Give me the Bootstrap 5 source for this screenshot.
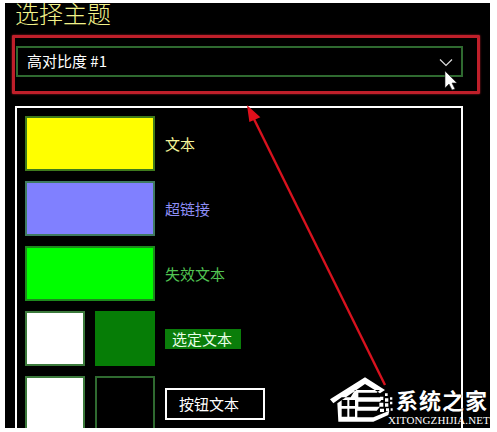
<!DOCTYPE html>
<html lang="zh">
<head>
<meta charset="utf-8">
<title>选择主题</title>
<link rel="stylesheet" href="https://cdn.jsdelivr.net/npm/bootstrap@5.3.0/dist/css/bootstrap.min.css">
<style>
html,body{background:#fff;height:100%;overflow:hidden}
body{font-family:"Noto Sans CJK SC","Liberation Sans",sans-serif;font-weight:400}
.shot{position:relative;width:485px;height:425px;margin:3px 0 0 5px;background:#000;overflow:hidden;padding-left:7px}
.ttl{margin:-2px 0 0 3px;height:34px;font-size:24px;line-height:24px;font-weight:300;color:#f2f28a}
.redbox{width:468px;height:59px;border:3px solid #bf1f2a;border-radius:1px;padding:8px 0 0 1px;box-shadow:0 0 2px #bf1f2a}
.pick{width:447px;height:31px;border:2px solid #2f6a30;padding:0 10px 0 9px;color:#fff;font-size:15px}
.chev{width:14px;height:9px;margin-right:-2px;margin-top:2px}
.prev{width:448px;height:340px;margin:12px 0 0 3px;border:2px solid #fff;padding:8px;display:flex;flex-direction:column;gap:10px}
.rowx{display:flex;align-items:center;gap:10px;height:55px;flex:none}
.sw{flex:none;height:55px;border:2px solid #1f6a20}
.wide{width:130px}
.half{width:60px}
.lab{font-size:15px;line-height:20px;white-space:nowrap}
.yel{background:#ff0;border-color:#3f7a1c}.blu{background:#8080ff;border-color:#3f7a60}.grn{background:#0f0;border-color:#1d8a1d}
.wht{background:#fff;border-color:#3c7a3c}.gfill{background:#067d06;border-color:#067d06}.blk{background:#000;border-color:#2f6a30}
.ty{color:#f5f59a}.tb{color:#8e8ef5}.tg{color:#52c452}
.tsel{background:#0a7d0a;color:#e8ffe8;width:76px;padding-left:7px}
.tbtn{width:100px;height:32px;border:2px solid #fff;color:#fff;padding-left:12px;line-height:28px;margin-top:1px}
.over{position:absolute;left:0;top:0;pointer-events:none}
.wm1{position:absolute;left:391px;top:383px;color:#fff;font-size:22px;font-weight:700;line-height:26px;letter-spacing:1px;white-space:nowrap;text-shadow:0 0 1px #000}
.wm2{position:absolute;left:383px;top:411px;color:#fff;font-family:"Liberation Serif",serif;font-size:11px;line-height:12px;white-space:nowrap;letter-spacing:.1px}
</style>
</head>
<body>
<div class="shot">
  <h1 class="ttl">选择主题</h1>
  <div class="redbox">
    <div class="pick d-flex align-items-center justify-content-between">
      <span>高对比度 #1</span>
      <svg class="chev" viewBox="0 0 14 9"><path d="M1 1.5 7 7.5 13 1.5" fill="none" stroke="#ddd" stroke-width="1.2"/></svg>
    </div>
  </div>
  <div class="prev">
    <div class="rowx"><div class="sw wide yel"></div><span class="lab ty">文本</span></div>
    <div class="rowx"><div class="sw wide blu"></div><span class="lab tb">超链接</span></div>
    <div class="rowx"><div class="sw wide grn"></div><span class="lab tg">失效文本</span></div>
    <div class="rowx"><div class="sw half wht"></div><div class="sw half gfill"></div><span class="lab tsel">选定文本</span></div>
    <div class="rowx"><div class="sw half wht"></div><div class="sw half blk"></div><span class="lab tbtn">按钮文本</span></div>
  </div>
  <svg class="over" width="485" height="425" viewBox="5 3 485 425">
    <path d="M385 385 251 113" stroke="#d8121e" stroke-width="2.4" fill="none"/>
    <path d="M248 107 259 117 250 121Z" fill="#e0101c" stroke="#e0101c" stroke-width="1.5"/>
    <path d="M445 71V88L449 84 452 90 455 89 452 83 457 83Z" fill="#fff" stroke="#222" stroke-width=".6"/>
    <g transform="translate(330 340) scale(.3333)">
      <path fill="#fff" d="M0 178 105 112 165 150 150 160 105 132 22 190 25 245 130 245 175 225 178 212 130 232 82 232 82 212 140 212 150 200 85 200 85 185 150 185 160 172 85 172 85 158 140 158 150 150 75 150 62 172 35 172 10 190Z"/>
      <path fill="#000" d="M35 180h17v18h-17zM58 180h17v18h-17zM35 206h17v24h-17zM58 206h17v24h-17z"/>
      <path fill="#fff" d="M150 170h10v10h-10zM165 160h8v8h-8zM165 175h10v10h-10zM180 172h7v7h-7zM148 188h12v12h-12zM165 190h10v10h-10zM180 185h7v8h-7zM150 206h12v10h-12zM168 205h9v9h-9zM182 205h6v7h-6z"/>
    </g>
  </svg>
  <div class="wm1">系统之家</div>
  <div class="wm2">XITONGZHIJIA.NET</div>
</div>
<script src="https://cdn.jsdelivr.net/npm/bootstrap@5.3.0/dist/js/bootstrap.bundle.min.js"></script>
</body>
</html>
